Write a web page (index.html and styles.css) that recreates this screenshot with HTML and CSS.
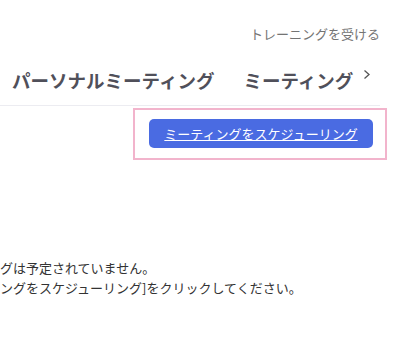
FILE: index.html
```html
<!DOCTYPE html>
<html lang="ja">
<head>
    <meta charset="UTF-8">
    <meta name="viewport" content="width=device-width, initial-scale=1.0">
    <title>ミーティング</title>
    <link rel="stylesheet" href="styles.css">
</head>
<body>
    <div class="top-bar">
        <a class="training-link" href="#">トレーニングを受ける</a>
    </div>
    <div class="tabs">
        <span class="tab">パーソナルミーティング</span>
        <span class="tab">ミーティング</span>
        <svg class="chevron" width="8" height="12" viewBox="0 0 8 12">
            <polyline points="1.5,1.5 6,5.5 1.5,9.5" fill="none" stroke="#555" stroke-width="1.3"/>
        </svg>
    </div>
    <div class="divider"></div>
    <div class="actions">
        <div class="highlight">
            <button class="schedule-button">ミーティングをスケジューリング</button>
        </div>
    </div>
    <div class="empty-message">
        <p>グは予定されていません。</p>
        <p>ングをスケジューリング]をクリックしてください。</p>
    </div>
</body>
</html>
```

FILE: styles.css
```css
body {
    margin: 0;
    background-color: #fff;
    font-family: "Noto Sans CJK JP", "Noto Sans", sans-serif;
    color: #333;
}
.top-bar {
    display: flex;
    justify-content: flex-end;
    padding: 24px 20px 0 0;
    height: 22px;
}
.training-link {
    font-size: 13px;
    line-height: 20px;
    color: #747474;
    text-decoration: none;
}
.tabs {
    display: flex;
    align-items: center;
    padding: 21px 0 0 12px;
    height: 26px;
}
.tab {
    font-size: 18.5px;
    font-weight: bold;
    line-height: 26px;
    color: #50505a;
    margin-right: 29px;
}
.tab:last-of-type {
    margin-right: 10px;
}
.chevron {
    margin-top: -10px;
}
.divider {
    margin: 12px 20px 0 0;
    height: 1px;
    background-color: #ececf1;
}
.actions {
    display: flex;
    justify-content: flex-end;
    padding: 2px 13px 0 0;
}
.highlight {
    border: 2px solid #f2b4cc;
    padding: 9px 12px 10px 14px;
}
.schedule-button {
    display: block;
    width: 224px;
    height: 29px;
    border: none;
    border-radius: 5px;
    background-color: #4a6be2;
    color: #fff;
    font-family: "Noto Sans CJK JP", sans-serif;
    font-size: 13px;
    text-decoration: underline;
    padding: 0;
    cursor: pointer;
}
.empty-message {
    padding-top: 98px;
}
.empty-message p {
    margin: 0;
    font-size: 13px;
    line-height: 20px;
    color: #333;
    white-space: nowrap;
}
```
